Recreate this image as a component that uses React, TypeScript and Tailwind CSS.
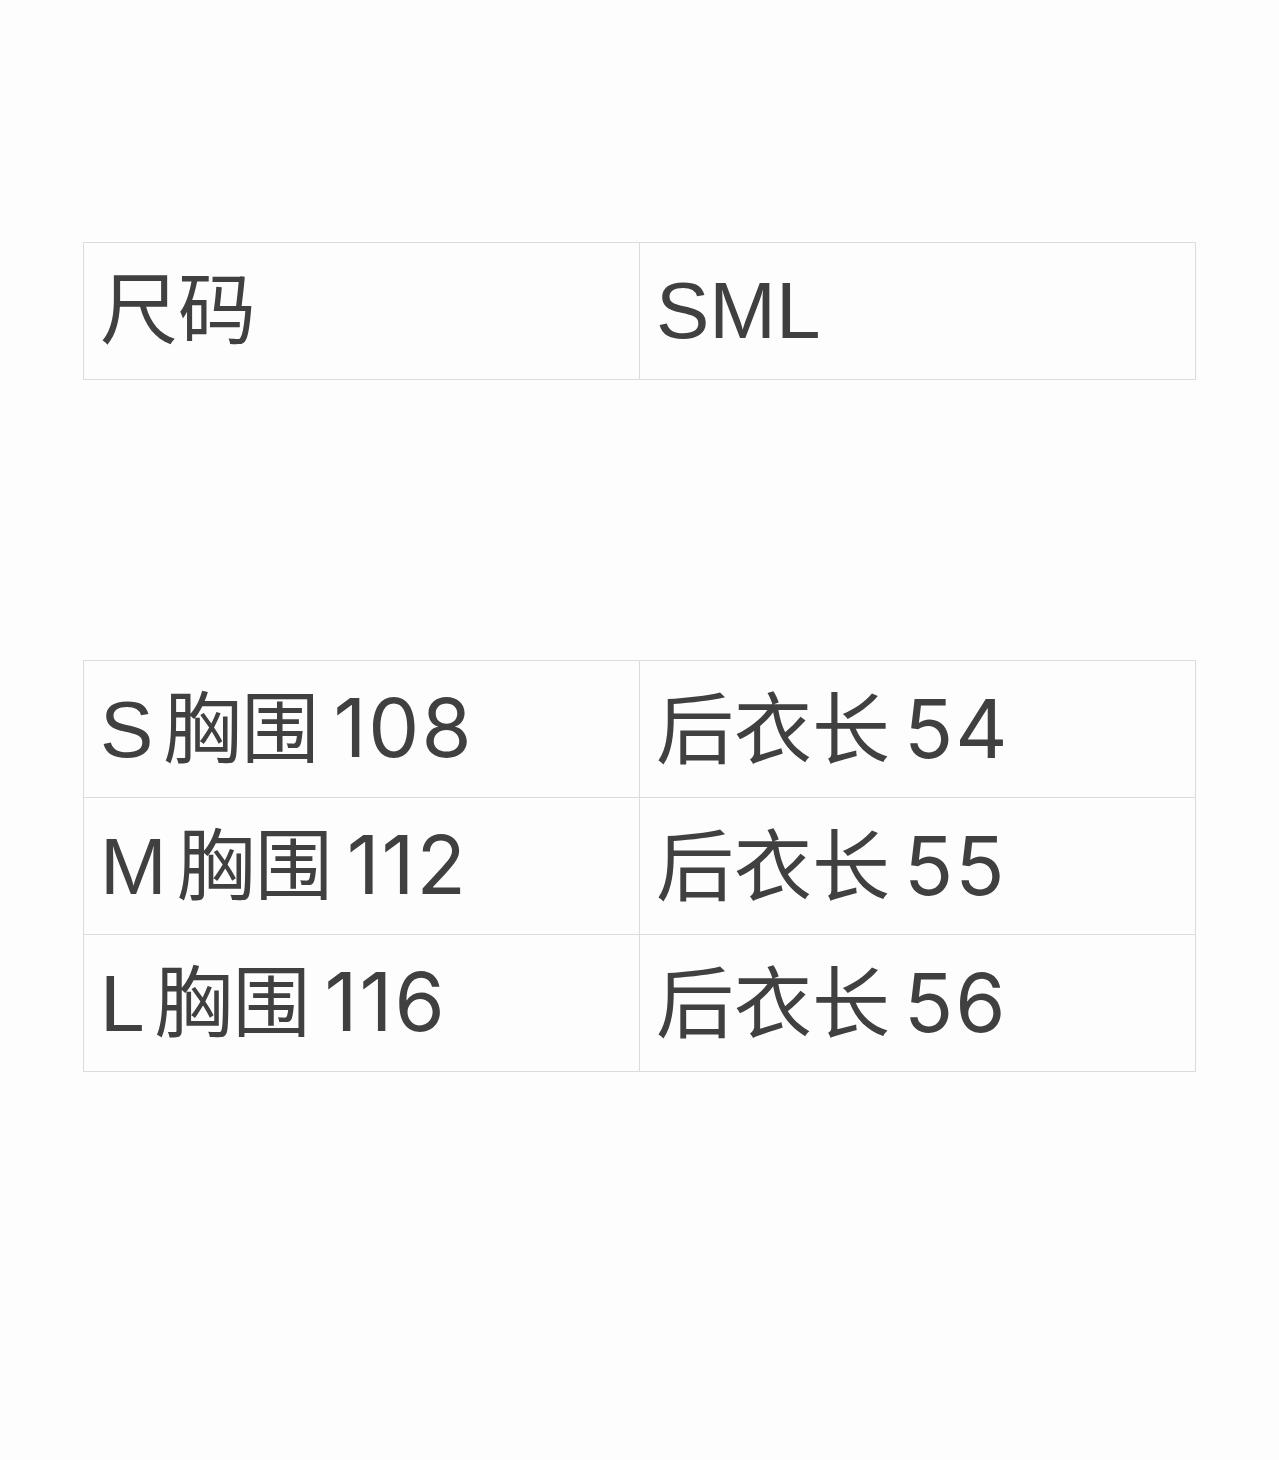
const sizeRows: [string[], string[]][] = [
  [['S', '胸围', '108'], ['后衣长', '54']],
  [['M', '胸围', '112'], ['后衣长', '55']],
  [['L', '胸围', '116'], ['后衣长', '56']],
]

const isNum = (s: string) => /^\d+$/.test(s)
const isCjk = (s: string) => /[\u4e00-\u9fff]/.test(s)

function Cell({ parts }: { parts: string[] }) {
  return (
    <td className="w-1/2 h-[137px] border border-[#dcdcdc] pl-4 align-middle text-[80px] leading-none text-[#404040]">
      <div className="flex items-baseline gap-[10px]">
        {parts.map(p => (
          <span
            key={p}
            className={
              isNum(p)
                ? 'ml-1 font-[Inter,sans-serif] text-[81px] tracking-[2px]'
                : isCjk(p)
                  ? 'text-[78px]'
                  : ''
            }
          >
            {p}
          </span>
        ))}
      </div>
    </td>
  )
}

export default function App() {
  return (
    <div
      className="min-h-[1460px] bg-[#fdfdfd] pt-[242px] px-[83px]"
      style={{ fontFamily: '"Liberation Sans", "Noto Sans CJK SC", sans-serif' }}
    >
      <table className="w-[1113px] border-collapse table-fixed">
        <tbody>
          <tr>
            <Cell parts={['尺码']} />
            <Cell parts={['SML']} />
          </tr>
        </tbody>
      </table>

      <table className="mt-[280px] w-[1113px] border-collapse table-fixed">
        <tbody>
          {sizeRows.map(([a, b]) => (
            <tr key={a.join('')}>
              <Cell parts={a} />
              <Cell parts={b} />
            </tr>
          ))}
        </tbody>
      </table>
    </div>
  )
}
